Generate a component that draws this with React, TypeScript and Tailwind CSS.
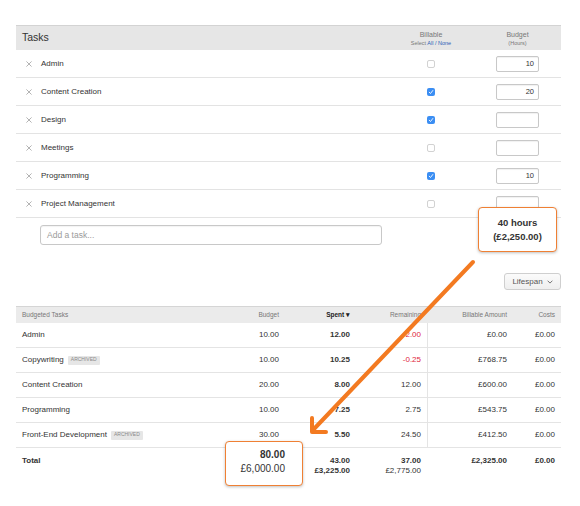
import React from "react";

const tasks = [
  { name: "Admin", checked: false, budget: "10" },
  { name: "Content Creation", checked: true, budget: "20" },
  { name: "Design", checked: true, budget: "" },
  { name: "Meetings", checked: false, budget: "" },
  { name: "Programming", checked: true, budget: "10" },
  { name: "Project Management", checked: false, budget: "" },
];

const budgeted = [
  { name: "Admin", archived: false, budget: "10.00", spent: "12.00", rem: "-2.00", red: true, bill: "£0.00", cost: "£0.00" },
  { name: "Copywriting", archived: true, budget: "10.00", spent: "10.25", rem: "-0.25", red: true, bill: "£768.75", cost: "£0.00" },
  { name: "Content Creation", archived: false, budget: "20.00", spent: "8.00", rem: "12.00", red: false, bill: "£600.00", cost: "£0.00" },
  { name: "Programming", archived: false, budget: "10.00", spent: "7.25", rem: "2.75", red: false, bill: "£543.75", cost: "£0.00" },
  { name: "Front-End Development", archived: true, budget: "30.00", spent: "5.50", rem: "24.50", red: false, bill: "£412.50", cost: "£0.00" },
];

function XIcon() {
  return (
    <svg width="6" height="6" viewBox="0 0 6 6" className="block">
      <path d="M0.7 0.7 L5.3 5.3 M5.3 0.7 L0.7 5.3" stroke="#aaaaaa" strokeWidth="0.9" strokeLinecap="round" />
    </svg>
  );
}

function Checkbox({ checked }: { checked: boolean }) {
  if (checked) {
    return (
      <div className="w-[8px] h-[8px] rounded-[2px] bg-[#3b8ef3] flex items-center justify-center">
        <svg width="6" height="6" viewBox="0 0 6 6">
          <path d="M1.2 3.2 L2.5 4.5 L4.8 1.5" stroke="white" strokeWidth="0.9" fill="none" strokeLinecap="round" strokeLinejoin="round" />
        </svg>
      </div>
    );
  }
  return <div className="w-[8px] h-[8px] rounded-[2px] bg-white border border-[#d2d2d2]" />;
}

export default function App() {
  return (
    <div className="w-[580px] h-[506px] bg-white relative overflow-hidden font-['Liberation_Sans',Arial,sans-serif] text-[#333]">
      <div className="pt-[25px] pl-[16px] w-[561px]">
        {/* Tasks table */}
        <div className="h-[25px] bg-[#e6e6e6] border-t border-[#d3d3d3] flex items-center">
          <div className="flex-1 pl-[6px] text-[10.5px] text-[#333]">Tasks</div>
          <div className="w-[86px] flex flex-col items-center">
            <div className="text-[7px] leading-[9px] text-[#777]">Billable</div>
            <div className="text-[5.5px] leading-[8px] text-[#777]">
              Select <span className="text-[#2c62b6]">All / None</span>
            </div>
          </div>
          <div className="w-[87px] flex flex-col items-center">
            <div className="text-[7px] leading-[9px] text-[#777]">Budget</div>
            <div className="text-[5.5px] leading-[8px] text-[#777]">(Hours)</div>
          </div>
        </div>
        {tasks.map((t) => (
          <div key={t.name} className="h-[28px] border-b border-[#e3e3e3] flex items-center">
            <div className="flex-1 flex items-center pl-[10px]">
              <XIcon />
              <span className="ml-[9px] text-[8px]">{t.name}</span>
            </div>
            <div className="w-[86px] flex justify-center">
              <Checkbox checked={t.checked} />
            </div>
            <div className="w-[87px] flex justify-center">
              <div className="w-[43px] h-[16px] border border-[#c8c8c8] rounded-[2px] bg-white flex items-center justify-end pr-[4px] text-[7.5px] text-[#333] shadow-[inset_0_1px_1px_rgba(0,0,0,0.06)]">
                {t.budget}
              </div>
            </div>
          </div>
        ))}
        <div className="pt-[7px] pl-[24px]">
          <div className="w-[342px] h-[20px] border border-[#c8c8c8] rounded-[3px] flex items-center pl-[6px] text-[8.5px] text-[#9a9a9a] shadow-[inset_0_1px_1px_rgba(0,0,0,0.05)]">
            Add a task...
          </div>
        </div>

        {/* Lifespan button */}
        <div className="flex justify-end mt-[28px]">
          <div className="w-[57px] h-[17px] border border-[#cfcfcf] rounded-[3px] bg-gradient-to-b from-[#fbfbfb] to-[#efefef] flex items-center justify-center gap-[4px] text-[8px] text-[#555]">
            <span>Lifespan</span>
            <svg width="6" height="4" viewBox="0 0 6 4">
              <path d="M0.6 0.7 L3 3.1 L5.4 0.7" stroke="#666" strokeWidth="0.9" fill="none" />
            </svg>
          </div>
        </div>

        {/* Budgeted tasks table */}
        <div className="mt-[16px]">
          <div className="h-[17px] bg-[#ebebeb] border-t border-[#d5d5d5] flex items-center text-[6.5px] text-[#777]">
            <div className="w-[209px] pl-[6px]">Budgeted Tasks</div>
            <div className="w-[60px] text-right pr-[6px]">Budget</div>
            <div className="w-[71px] text-right pr-[6px] font-bold text-[#222]">Spent ▾</div>
            <div className="w-[71px] text-right pr-[6px]">Remaining</div>
            <div className="w-[86px] text-right pr-[6px]">Billable Amount</div>
            <div className="w-[48px] text-right pr-[6px]">Costs</div>
          </div>
          {budgeted.map((r) => (
            <div key={r.name} className="h-[25px] border-b border-[#e4e4e4] flex items-stretch text-[8px]">
              <div className="w-[209px] pl-[6px] flex items-center">
                <span>{r.name}</span>
                {r.archived && (
                  <span className="ml-[4px] h-[9px] px-[3px] bg-[#e6e6e6] text-[#8a8a8a] text-[5px] flex items-center rounded-[1px]">
                    ARCHIVED
                  </span>
                )}
              </div>
              <div className="w-[60px] pr-[6px] flex items-center justify-end">{r.budget}</div>
              <div className="w-[71px] pr-[6px] flex items-center justify-end font-bold">{r.spent}</div>
              <div className={`w-[71px] pr-[6px] flex items-center justify-end ${r.red ? "text-[#e0263c]" : ""}`}>{r.rem}</div>
              <div className="w-[86px] pr-[6px] flex items-center justify-end border-l border-[#e4e4e4]">{r.bill}</div>
              <div className="w-[48px] pr-[6px] flex items-center justify-end">{r.cost}</div>
            </div>
          ))}
          <div className="h-[38px] flex items-start pt-[8px] text-[8px] leading-[10px]">
            <div className="w-[209px] pl-[6px] font-bold">Total</div>
            <div className="w-[60px] relative">
              <div className="absolute left-0 top-[-15px] w-[78px] h-[45px] bg-white border-[1.5px] border-[#ef8034] rounded-[4px] shadow-[0_1px_3px_rgba(0,0,0,0.25)] flex flex-col items-end pr-[17px] pt-[6px] text-[10px] leading-[14px] z-10">
                <span className="font-bold">80.00</span>
                <span>£6,000.00</span>
              </div>
            </div>
            <div className="w-[71px] pr-[6px] flex flex-col items-end font-bold">
              <span>43.00</span>
              <span>£3,225.00</span>
            </div>
            <div className="w-[71px] pr-[6px] flex flex-col items-end">
              <span className="font-bold">37.00</span>
              <span>£2,775.00</span>
            </div>
            <div className="w-[86px] pr-[6px] flex flex-col items-end font-bold">
              <span>£2,325.00</span>
            </div>
            <div className="w-[48px] pr-[6px] flex flex-col items-end font-bold">
              <span>£0.00</span>
            </div>
          </div>
        </div>
      </div>

      {/* Top callout */}
      <div className="absolute left-[478px] top-[207px] w-[79px] h-[45px] bg-white border-[1.5px] border-[#ef8034] rounded-[4px] shadow-[0_1px_3px_rgba(0,0,0,0.25)] flex flex-col items-center justify-center text-[9.5px] leading-[14px] font-bold text-[#333] z-10">
        <span>40 hours</span>
        <span>(£2,250.00)</span>
      </div>

      {/* Arrow */}
      <svg className="absolute left-0 top-0 pointer-events-none z-20" width="580" height="506" viewBox="0 0 580 506">
        <g stroke="#f37a21" strokeWidth="4" strokeLinecap="round" strokeLinejoin="round" fill="none">
          <path d="M473 262 L313 430" />
          <path d="M312 418 L312 432 L326 432" />
        </g>
      </svg>
    </div>
  );
}
